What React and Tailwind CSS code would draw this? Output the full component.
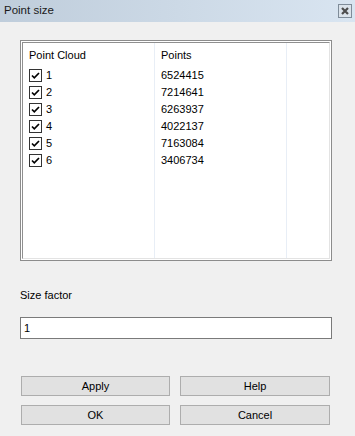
import { useState } from 'react';

const rows = [
  { id: 1, points: '6524415' },
  { id: 2, points: '7214641' },
  { id: 3, points: '6263937' },
  { id: 4, points: '4022137' },
  { id: 5, points: '7163084' },
  { id: 6, points: '3406734' },
];

function CheckBox({ checked }) {
  return (
    <span className="w-[13px] h-[13px] border border-[#333333] bg-white flex items-center justify-center shrink-0">
      {checked && (
        <svg width="11" height="11" viewBox="0 0 11 11">
          <path d="M2 5.5 L4.3 7.8 L9 3" fill="none" stroke="#000" strokeWidth="1.7" />
        </svg>
      )}
    </span>
  );
}

function Button({ label }) {
  return (
    <button className="h-[20px] bg-[#e1e1e1] border border-[#adadad] text-[11px] font-normal text-black flex items-center justify-center">
      {label}
    </button>
  );
}

export default function App() {
  const [checked] = useState(rows.map(() => true));
  const [factor, setFactor] = useState('1');

  return (
    <div className="w-[355px] h-[436px] bg-[#f0f0f0] flex flex-col font-['Liberation_Sans',Arial,sans-serif] text-[11px] text-black">
      {/* title bar */}
      <div className="h-[22px] bg-gradient-to-r from-[#bfcddb] to-[#d9e5f1] flex items-center justify-between pl-[4px] pr-[3px]">
        <span className="text-[11.5px] text-[#1a1a1a]">Point size</span>
        <span className="w-[14px] h-[14px] border border-[#7f8c99] bg-[#dbe3eb] flex items-center justify-center">
          <svg width="8" height="8" viewBox="0 0 8 8">
            <path d="M1 1 L7 7 M7 1 L1 7" stroke="#4d4d4d" strokeWidth="2.2" />
          </svg>
        </span>
      </div>

      <div className="pl-[20px] w-[332px] flex flex-col">
        {/* list */}
        <div className="mt-[18px] h-[221px] border border-[#8c8c8c] bg-white p-[1px]">
          <div className="h-full border border-[#8f8f8f] border-r-[#e3e3e3] border-b-[#e3e3e3] flex">
            <div className="w-[132px] border-r border-[#e8eef6] flex flex-col">
              <div className="h-[24px] pl-[6px] flex items-center">Point Cloud</div>
              {rows.map((r, i) => (
                <div key={r.id} className="h-[17px] pl-[6px] flex items-center gap-[4px]">
                  <CheckBox checked={checked[i]} />
                  <span>{r.id}</span>
                </div>
              ))}
            </div>
            <div className="w-[132px] border-r border-[#e8eef6] flex flex-col">
              <div className="h-[24px] pl-[6px] flex items-center">Points</div>
              {rows.map((r) => (
                <div key={r.id} className="h-[17px] pl-[6px] flex items-center">
                  {r.points}
                </div>
              ))}
            </div>
            <div className="flex-1" />
          </div>
        </div>

        <div className="mt-[27px] h-[14px] flex items-center">Size factor</div>

        <input
          className="mt-[15px] h-[22px] border border-[#7a7a7a] bg-white px-[3px] text-[11px] outline-none"
          value={factor}
          onChange={(e) => setFactor(e.target.value)}
        />

        <div className="mt-[37px] pl-[1px] grid grid-cols-[149px_150px] gap-x-[10px] gap-y-[9px]">
          <Button label="Apply" />
          <Button label="Help" />
          <Button label="OK" />
          <Button label="Cancel" />
        </div>
      </div>
    </div>
  );
}
